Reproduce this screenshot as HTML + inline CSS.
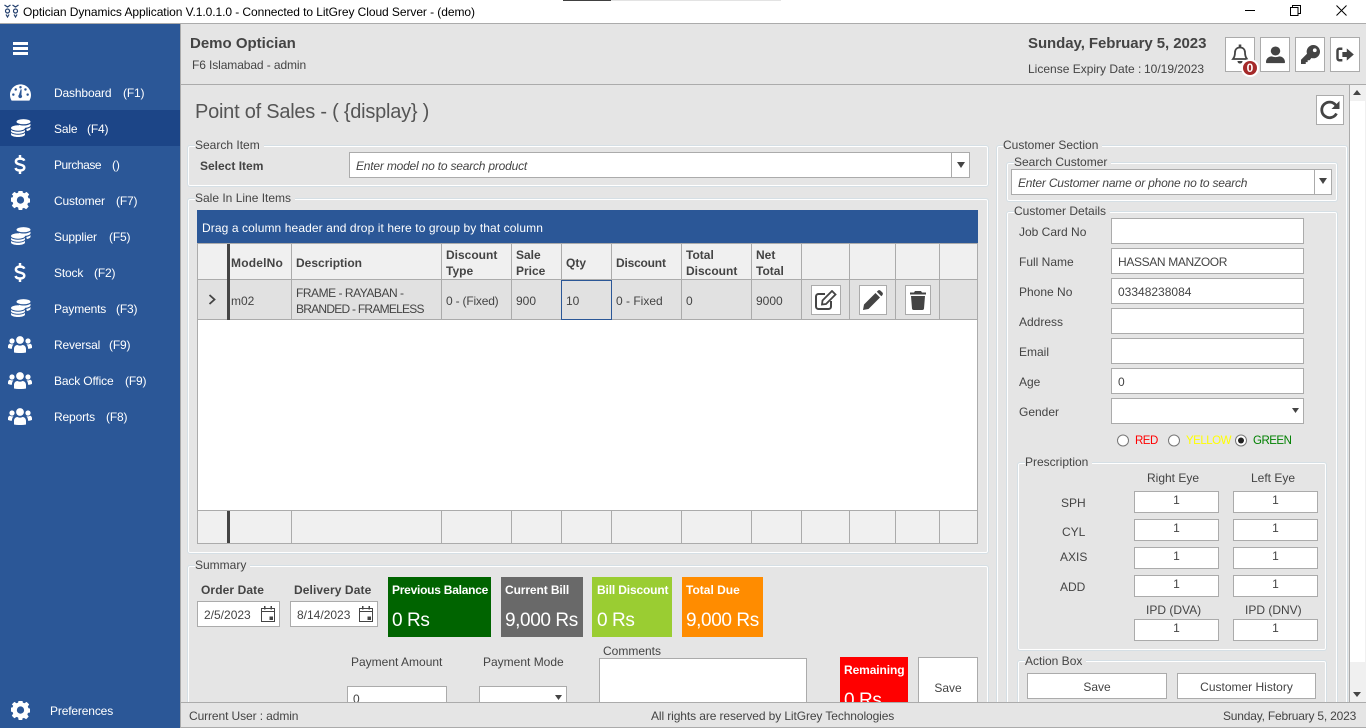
<!DOCTYPE html>
<html lang="en">
<head>
<meta charset="utf-8">
<title>Optician Dynamics Application</title>
<style>
html,body{margin:0;padding:0;width:1366px;height:728px;overflow:hidden;background:#e5e5e5;font-family:"Liberation Sans",Arial,sans-serif;font-size:12px;color:#444}
*{box-sizing:border-box}
#r{position:relative;width:1366px;height:728px;overflow:hidden}
.a,.t,.g,.i,.b{position:absolute}
.t{white-space:nowrap;line-height:16px;height:16px}
.w{color:#fff;letter-spacing:-.15px}
.s{font-weight:bold}
.g{border:1px solid #d5dfe5;box-shadow:inset 0 0 0 1px #fff;border-radius:3px}
.l{background:#e5e5e5;padding:0 4px 0 0}
.i{background:#fff;border:1px solid #ababab}
.b{background:#fff;border:1px solid #ababab;text-align:center;color:#444;display:flex;align-items:center;justify-content:center}
.v{position:absolute;width:1px;background:#ababab}
.c{position:absolute;white-space:nowrap;line-height:16px;font-weight:bold;color:#444}
.d{position:absolute;white-space:nowrap;line-height:16px;color:#444}
.tile{position:absolute;top:577px;height:60px;color:#fff}
.tile b{position:absolute;left:4px;top:5px;font-size:12px;line-height:16px;white-space:nowrap}
.tile span{position:absolute;left:4px;top:32px;font-size:19px;line-height:24px;white-space:nowrap;letter-spacing:-.4px}
.n{text-align:center;line-height:17px;font-size:12px;color:#444}
.r{font-size:11.500px;letter-spacing:-.5px}
svg{display:block}
.ic{position:absolute;fill:#fff}
</style>
</head>
<body>
<div id="r">
<svg width="0" height="0" style="position:absolute">
<defs>
<symbol id="coins" viewBox="0 0 20 18"><g fill="#fff"><ellipse cx="12.500" cy="2.700" rx="7" ry="2.600"/><path d="M8 5.900c1.300.4 2.900.6 4.500.6 2.700 0 5.400-.6 7-1.800v1.500c0 1.300-2.500 2.400-5.500 2.700C12.500 7.800 10.500 7 8 6.700z"/><path d="M15.300 10c1.900-.4 3.300-1 4.200-1.900v1.600c0 1-1.500 1.900-3.700 2.300z"/><ellipse cx="7" cy="9" rx="7" ry="2.700"/><path d="M0 11c1.500 1.100 4 1.800 7 1.800s5.500-.7 7-1.800v1.300c0 1.400-3.100 2.500-7 2.500s-7-1.100-7-2.500z"/><path d="M0 14c1.500 1.100 4 1.800 7 1.800s5.500-.7 7-1.800v1.500c0 1.400-3.100 2.500-7 2.500s-7-1.100-7-2.500z"/></g></symbol>
<symbol id="dollar" viewBox="0 0 12 20"><path fill="none" stroke="#fff" stroke-width="2.600" d="M10.500 6C10 4.500 8.500 3.800 6 3.800 3.300 3.800 1.700 5 1.700 6.800c0 4.200 8.800 2.300 8.800 6.500 0 1.800-1.700 3-4.500 3-2.600 0-4.200-.9-4.700-2.600"/><path fill="#fff" d="M4.700 0h2.600v4H4.700zM4.700 16h2.600v4H4.700z"/></symbol>
<symbol id="gear" viewBox="0 0 20 20"><path fill="#fff" fill-rule="evenodd" d="M8 0h4l.6 2.800 1.700.7L16.700 2l2.800 2.800-1.500 2.400.8 1.800 2.200.5v4l-2.800.6-.7 1.700 1.500 2.400-2.800 2.800-2.400-1.500-1.700.7L12 22H8l-.6-2.800-1.700-.7L3.300 20 .5 17.200 2 14.800l-.7-1.700L-1 12.500v-4l2.300-.5.700-1.800L.5 4.800 3.300 2l2.400 1.500 1.700-.7zM10 7a4 4 0 1 0 0 8 4 4 0 0 0 0-8z" transform="translate(0 -1) scale(.96) translate(.4 0)"/></symbol>
<symbol id="users" viewBox="0 0 24 17"><g fill="#fff"><circle cx="12" cy="4" r="3.900"/><circle cx="4" cy="5" r="2.600"/><circle cx="20" cy="5" r="2.600"/><path d="M6 16.500v-3.500c0-2.400 1.600-4 3.500-4 1.500.9 3.500.9 5 0 1.900 0 3.500 1.600 3.500 4v3.500c-3.500.7-8.500.7-12 0z"/><path d="M0 10.500c0-1.500.8-2.800 2-2.800 1 .7 2.500.8 3.600.5-1.100 1-1.600 2.500-1.700 4.600-1.700 0-3-.4-3.900-.9zM24 10.500c0-1.500-.8-2.800-2-2.800-1 .7-2.500.8-3.600.5 1.100 1 1.600 2.500 1.700 4.600 1.700 0 3-.4 3.900-.9z"/></g></symbol>
</defs>
</svg>

<!-- title bar -->
<div class="a" style="left:0;top:0;width:1366px;height:24px;background:#fff;border-bottom:1px solid #ababab"></div>
<div class="a" style="left:563px;top:0;width:48px;height:1px;background:#404040"></div>
<div class="a" style="left:611px;top:0;width:170px;height:1px;background:#e3e3e3"></div>
<svg class="a" style="left:4px;top:4px" width="15" height="14" viewBox="0 0 15 14"><g fill="none" stroke="#24406e" stroke-width="1.200"><path d="M.5 1l3 2 3-2M8.500 1l3 2 3-2"/><circle cx="3.500" cy="7" r="2"/><circle cx="11.500" cy="7" r="2"/><path d="M2 10.500l1.500 2.500 1.500-2.500M10 10.500l1.500 2.500 1.500-2.500"/></g></svg>
<div class="t" style="left:23px;top:4px;color:#000;letter-spacing:-.07px">Optician Dynamics Application V.1.0.1.0 - Connected to LitGrey Cloud Server - (demo)</div>
<div class="a" style="left:1245px;top:10px;width:10px;height:1px;background:#000"></div>
<svg class="a" style="left:1290px;top:5px" width="11" height="11" viewBox="0 0 11 11"><path fill="none" stroke="#000" d="M.5 2.500h7.500v8H.5zM2.500 2.500V.5h8v8H8"/></svg>
<svg class="a" style="left:1336px;top:5px" width="11" height="11" viewBox="0 0 11 11"><path stroke="#000" d="M.5.500l10 10M10.500.500l-10 10"/></svg>

<!-- sidebar -->
<div class="a" style="left:0;top:24px;width:180px;height:704px;background:#2b5797"></div>
<div class="a" style="left:180px;top:24px;width:1px;height:704px;background:#ababab"></div>
<div class="a" style="left:0;top:110px;width:180px;height:36px;background:#1c4587"></div>
<div class="a" style="left:13px;top:42px;width:15px;height:3px;background:#fff"></div>
<div class="a" style="left:13px;top:47px;width:15px;height:3px;background:#fff"></div>
<div class="a" style="left:13px;top:52px;width:15px;height:3px;background:#fff"></div>

<svg class="ic" style="left:10px;top:84px" width="21" height="17" viewBox="0 0 22 17"><path fill="#fff" fill-rule="evenodd" d="M11 0C5 0 0 4.800 0 11c0 2 .5 4 1.500 5.700.2.200.4.300.6.300h17.800c.2 0 .4-.1.600-.3C21.500 15 22 13 22 11 22 4.800 17 0 11 0zM3.500 12a1.300 1.300 0 1 1 0-2.600 1.300 1.300 0 0 1 0 2.600zM6 6.700a1.300 1.300 0 1 1 0-2.600 1.300 1.300 0 0 1 0 2.600zM11 4.300a1.300 1.300 0 1 1 0-2.600 1.300 1.300 0 0 1 0 2.600zM16.200 6.700a1.300 1.300 0 1 1 0-2.600 1.300 1.300 0 0 1 0 2.600zM18.500 12a1.300 1.300 0 1 1 0-2.600 1.300 1.300 0 0 1 0 2.600zM12.700 12.400a2 2 0 1 1-3.300-1.500l1.800-5.800 1 .2-.2 5.900c.5.300.7.700.7 1.200z"/></svg>
<div class="t w" style="left:54px;top:85px">Dashboard</div><div class="t w" style="left:123px;top:85px">(F1)</div>

<svg class="ic" style="left:11px;top:119px" width="20" height="18"><use href="#coins"/></svg>
<div class="t w" style="left:54px;top:121px">Sale</div><div class="t w" style="left:87px;top:121px">(F4)</div>

<svg class="ic" style="left:14px;top:155px" width="12" height="19"><use href="#dollar"/></svg>
<div class="t w" style="left:54px;top:157px;letter-spacing:-.45px">Purchase</div><div class="t w" style="left:112px;top:157px">()</div>

<svg class="ic" style="left:11px;top:191px" width="19" height="19"><use href="#gear"/></svg>
<div class="t w" style="left:54px;top:193px">Customer</div><div class="t w" style="left:116px;top:193px">(F7)</div>

<svg class="ic" style="left:11px;top:227px" width="20" height="18"><use href="#coins"/></svg>
<div class="t w" style="left:54px;top:229px">Supplier</div><div class="t w" style="left:109px;top:229px">(F5)</div>

<svg class="ic" style="left:14px;top:263px" width="12" height="19"><use href="#dollar"/></svg>
<div class="t w" style="left:54px;top:265px">Stock</div><div class="t w" style="left:94px;top:265px">(F2)</div>

<svg class="ic" style="left:11px;top:299px" width="20" height="18"><use href="#coins"/></svg>
<div class="t w" style="left:54px;top:301px">Payments</div><div class="t w" style="left:116px;top:301px">(F3)</div>

<svg class="ic" style="left:8px;top:336px" width="24" height="17"><use href="#users"/></svg>
<div class="t w" style="left:54px;top:337px">Reversal</div><div class="t w" style="left:109px;top:337px">(F9)</div>

<svg class="ic" style="left:8px;top:372px" width="24" height="17"><use href="#users"/></svg>
<div class="t w" style="left:54px;top:373px">Back Office</div><div class="t w" style="left:125px;top:373px">(F9)</div>

<svg class="ic" style="left:8px;top:408px" width="24" height="17"><use href="#users"/></svg>
<div class="t w" style="left:54px;top:409px">Reports</div><div class="t w" style="left:106px;top:409px">(F8)</div>

<svg class="ic" style="left:11px;top:701px" width="19" height="19"><use href="#gear"/></svg>
<div class="t w" style="left:50px;top:703px">Preferences</div>

<!-- top header -->
<div class="a" style="left:181px;top:84px;width:1185px;height:1px;background:#ababab"></div>
<div class="t s" style="left:190px;top:36px;font-size:15px">Demo Optician</div>
<div class="t" style="left:192px;top:57px;letter-spacing:-.1px">F6 Islamabad - admin</div>
<div class="t s" style="left:1028px;top:36px;font-size:15px;letter-spacing:-.06px">Sunday, February 5, 2023</div>
<div class="t" style="left:1028px;top:61px">License Expiry Date :</div>
<div class="t" style="left:1144px;top:61px">10/19/2023</div>

<div class="b" style="left:1225px;top:37px;width:30px;height:35px"><svg width="20" height="22" viewBox="0 0 20 22" style="margin-top:-1px"><path fill="none" stroke="#444" stroke-width="1.800" d="M3 16c1.500-2 2-3.500 2-6.500C5 6.500 7 4.500 10 4.500s5 2 5 5c0 3 .5 4.500 2 6.500z"/><path fill="#444" d="M8.700 1.500h2.600v3H8.700zM7.500 18h5c0 1.500-1 2.500-2.500 2.500S7.500 19.500 7.500 18z"/></svg></div>
<div class="a" style="left:1241px;top:59px;width:18px;height:18px;border-radius:50%;background:#fff"></div>
<div class="a" style="left:1243px;top:61px;width:14px;height:14px;border-radius:50%;background:#a52a2a;color:#fff;font-weight:bold;font-size:12px;line-height:14px;text-align:center">0</div>

<div class="b" style="left:1260px;top:37px;width:30px;height:35px"><svg width="19" height="18" viewBox="0 0 20 20" preserveAspectRatio="none"><circle cx="10" cy="5.500" r="5" fill="#444"/><path fill="#444" d="M1 19c-.6 0-1-.4-1-1 0-4 3-6.500 6-6.500 1.200.5 2.500.8 4 .8s2.800-.3 4-.8c3 0 6 2.500 6 6.500 0 .6-.4 1-1 1z"/></svg></div>
<div class="b" style="left:1295px;top:37px;width:30px;height:35px"><svg width="19" height="19" viewBox="0 0 20 20"><path fill="#444" fill-rule="evenodd" d="M13 0a7 7 0 0 1 0 14c-.7 0-1.400-.1-2-.3L9 16H7v2H5v2H0v-4.500l6.300-6.300A7 7 0 0 1 13 0zm1.500 3.500a2 2 0 1 0 0 4 2 2 0 0 0 0-4z"/></svg></div>
<div class="b" style="left:1330px;top:37px;width:30px;height:35px"><svg width="18" height="15" viewBox="0 0 20 17"><path fill="#444" d="M12 1.500l8 7-8 7v-4.200H7V5.700h5z"/><path fill="none" stroke="#444" stroke-width="2.800" d="M7 2H3.500C2.300 2 1.500 3 1.500 4.200v8.600c0 1.200.8 2.200 2 2.200H7"/></svg></div>

<!-- page title -->
<div class="t" style="left:195px;top:100px;font-size:20px;line-height:24px;height:24px;color:#555;letter-spacing:-.24px">Point of Sales - ( {display} )</div>
<div class="b" style="left:1316px;top:95px;width:28px;height:30px"><svg width="22" height="20" viewBox="0 0 22 20"><path fill="none" stroke="#444" stroke-width="2.800" d="M17.500 13.500A7.800 7.800 0 1 1 17 5.500"/><path fill="#444" d="M20.500 1v8h-8z"/></svg></div>

<!-- Search Item -->
<div class="g" style="left:187px;top:145px;width:802px;height:42px"></div>
<div class="t l" style="left:195px;top:137px">Search Item</div>
<div class="t s" style="left:200px;top:158px">Select Item</div>
<div class="i" style="left:349px;top:152px;width:621px;height:26px"></div>
<div class="t" style="left:356px;top:158px;font-style:italic;letter-spacing:-.2px">Enter model no to search product</div>
<div class="v" style="left:951px;top:153px;height:24px"></div>
<svg class="a" style="left:957px;top:162px" width="8" height="6"><path fill="#444" d="M0 0h8L4 6z"/></svg>

<!-- Sale lines -->
<div class="g" style="left:187px;top:198px;width:802px;height:356px"></div>
<div class="t l" style="left:195px;top:190px">Sale In Line Items</div>
<div class="a" style="left:197px;top:210px;width:781px;height:34px;background:#2b5797"></div>
<div class="t w" style="left:202px;top:220px;letter-spacing:.1px">Drag a column header and drop it here to group by that column</div>
<div class="a" style="left:197px;top:243px;width:781px;height:301px;background:#fff;border:1px solid #ababab;border-bottom:2px solid #ababab"></div>
<div class="a" style="left:198px;top:244px;width:779px;height:36px;background:#f0f0f0;border-bottom:1px solid #ababab"></div>
<div class="a" style="left:198px;top:280px;width:779px;height:40px;background:#e1e1e1;border-bottom:1px solid #ababab"></div>
<div class="a" style="left:198px;top:510px;width:779px;height:33px;background:#f0f0f0;border-top:1px solid #ababab"></div>

<div class="a" style="left:227px;top:244px;width:3px;height:76px;background:#444"></div>
<div class="a" style="left:227px;top:511px;width:3px;height:32px;background:#444"></div>
<div class="v" style="left:291px;top:244px;height:76px"></div><div class="v" style="left:291px;top:511px;height:32px"></div>
<div class="v" style="left:441px;top:244px;height:76px"></div><div class="v" style="left:441px;top:511px;height:32px"></div>
<div class="v" style="left:511px;top:244px;height:76px"></div><div class="v" style="left:511px;top:511px;height:32px"></div>
<div class="v" style="left:561px;top:244px;height:76px"></div><div class="v" style="left:561px;top:511px;height:32px"></div>
<div class="v" style="left:611px;top:244px;height:76px"></div><div class="v" style="left:611px;top:511px;height:32px"></div>
<div class="v" style="left:681px;top:244px;height:76px"></div><div class="v" style="left:681px;top:511px;height:32px"></div>
<div class="v" style="left:751px;top:244px;height:76px"></div><div class="v" style="left:751px;top:511px;height:32px"></div>
<div class="v" style="left:801px;top:244px;height:76px"></div><div class="v" style="left:801px;top:511px;height:32px"></div>
<div class="v" style="left:849px;top:244px;height:76px"></div><div class="v" style="left:849px;top:511px;height:32px"></div>
<div class="v" style="left:895px;top:244px;height:76px"></div><div class="v" style="left:895px;top:511px;height:32px"></div>
<div class="v" style="left:939px;top:244px;height:76px"></div><div class="v" style="left:939px;top:511px;height:32px"></div>

<div class="c" style="left:231px;top:255px;letter-spacing:.2px">ModelNo</div>
<div class="c" style="left:296px;top:255px">Description</div>
<div class="c" style="left:446px;top:247px">Discount<br>Type</div>
<div class="c" style="left:516px;top:247px">Sale<br>Price</div>
<div class="c" style="left:566px;top:255px">Qty</div>
<div class="c" style="left:616px;top:255px;letter-spacing:-.2px">Discount</div>
<div class="c" style="left:686px;top:247px">Total<br>Discount</div>
<div class="c" style="left:756px;top:247px">Net<br>Total</div>

<svg class="a" style="left:208px;top:294px" width="8" height="11" viewBox="0 0 8 11"><path fill="none" stroke="#444" stroke-width="1.800" d="M1.500 1l5 4.500-5 4.500"/></svg>
<div class="d" style="left:231px;top:293px">m02</div>
<div class="d" style="left:296px;top:285px"><span style="letter-spacing:-.47px">FRAME - RAYABAN -</span><br><span style="letter-spacing:-.75px">BRANDED - FRAMELESS</span></div>
<div class="d" style="left:446px;top:293px;letter-spacing:-.2px">0 - (Fixed)</div>
<div class="d" style="left:516px;top:293px">900</div>
<div class="a" style="left:561px;top:280px;width:51px;height:40px;border:1px solid #2b5797"></div>
<div class="d" style="left:566px;top:293px">10</div>
<div class="d" style="left:616px;top:293px">0 - Fixed</div>
<div class="d" style="left:686px;top:293px">0</div>
<div class="d" style="left:756px;top:293px">9000</div>

<div class="b" style="left:811px;top:285px;width:30px;height:30px"><svg width="22" height="20" viewBox="0 0 22 20"><path fill="none" stroke="#444" stroke-width="2" d="M10 4H3.500C2.100 4 1 5.100 1 6.500v10C1 17.900 2.100 19 3.500 19h10c1.400 0 2.500-1.100 2.500-2.500V11"/><path fill="none" stroke="#444" stroke-width="1.800" d="M7.500 10.500L17 1l3.500 3.500-9.500 9.500-4 .5z"/></svg></div>
<div class="b" style="left:859px;top:285px;width:28px;height:30px"><svg width="20" height="20" viewBox="0 0 20 20"><path fill="#444" d="M0 20l1-5.500L12.500 3l4.500 4.500L5.500 19zM13.800 1.700l1-1c.8-.8 2-.8 2.800 0l1.700 1.700c.8.8.8 2 0 2.800l-1 1z"/></svg></div>
<div class="b" style="left:905px;top:285px;width:26px;height:30px"><svg width="16" height="19" viewBox="0 0 16 19"><path fill="#444" d="M5 0h6l1 1.500h4v2H0v-2h4zM1 5h14l-1 12.500c-.1.900-.8 1.500-1.700 1.500H3.700c-.9 0-1.600-.6-1.700-1.500z"/></svg></div>

<!-- Summary -->
<div class="g" style="left:187px;top:565px;width:802px;height:180px"></div>
<div class="t l" style="left:195px;top:557px">Summary</div>
<div class="t s" style="left:201px;top:582px;letter-spacing:.1px">Order Date</div>
<div class="t s" style="left:294px;top:582px;letter-spacing:.1px">Delivery Date</div>
<div class="i" style="left:197px;top:601px;width:83px;height:26px"></div>
<div class="t" style="left:204px;top:607px">2/5/2023</div>
<svg class="a" style="left:261px;top:606px" width="14" height="16" viewBox="0 0 14 16"><path fill="none" stroke="#444" d="M.5 2.500h13v13H.5zM.5 5.500h13"/><path fill="#444" d="M3 0h1.500v3.500H3zM9.500 0H11v3.500H9.500zM8.500 10.500h3.500v3.500H8.500z"/></svg>
<div class="i" style="left:290px;top:601px;width:88px;height:26px"></div>
<div class="t" style="left:297px;top:607px">8/14/2023</div>
<svg class="a" style="left:359px;top:606px" width="14" height="16" viewBox="0 0 14 16"><path fill="none" stroke="#444" d="M.5 2.500h13v13H.5zM.5 5.500h13"/><path fill="#444" d="M3 0h1.500v3.500H3zM9.500 0H11v3.500H9.500zM8.500 10.500h3.500v3.500H8.500z"/></svg>

<div class="tile" style="left:388px;width:103px;background:#006400"><b style="letter-spacing:-.25px">Previous Balance</b><span>0 Rs</span></div>
<div class="tile" style="left:501px;width:82px;background:#696969"><b style="letter-spacing:-.1px">Current Bill</b><span>9,000 Rs</span></div>
<div class="tile" style="left:592px;width:80px;background:#9acd32"><b style="left:5px;letter-spacing:-.15px">Bill Discount</b><span style="left:5px">0 Rs</span></div>
<div class="tile" style="left:682px;width:81px;background:#ff8c00"><b>Total Due</b><span>9,000 Rs</span></div>

<div class="t" style="left:351px;top:654px">Payment Amount</div>
<div class="t" style="left:483px;top:654px">Payment Mode</div>
<div class="t" style="left:603px;top:643px">Comments</div>
<div class="i" style="left:347px;top:686px;width:100px;height:40px"></div>
<div class="t" style="left:353px;top:691px">0</div>
<div class="i" style="left:479px;top:686px;width:88px;height:40px"></div>
<svg class="a" style="left:555px;top:695px" width="7" height="5"><path fill="#444" d="M0 0h7L3.500 5z"/></svg>
<div class="i" style="left:599px;top:658px;width:208px;height:70px"></div>
<div class="tile" style="left:840px;top:657px;width:68px;height:60px;background:#f00"><b style="letter-spacing:-.1px">Remaining</b><span>0 Rs</span></div>
<div class="b" style="left:918px;top:657px;width:60px;height:60px;padding-top:1px">Save</div>

<!-- Customer Section -->
<div class="g" style="left:996px;top:145px;width:352px;height:600px"></div>
<div class="t l" style="left:1003px;top:137px">Customer Section</div>
<div class="g" style="left:1006px;top:162px;width:332px;height:40px"></div>
<div class="t l" style="left:1014px;top:154px">Search Customer</div>
<div class="i" style="left:1011px;top:169px;width:321px;height:26px"></div>
<div class="t" style="left:1018px;top:175px;font-style:italic;letter-spacing:-.2px">Enter Customer name or phone no to search</div>
<div class="v" style="left:1314px;top:170px;height:24px"></div>
<svg class="a" style="left:1319px;top:178px" width="8" height="6"><path fill="#444" d="M0 0h8L4 6z"/></svg>

<div class="g" style="left:1006px;top:211px;width:332px;height:530px"></div>
<div class="t l" style="left:1014px;top:203px">Customer Details</div>

<div class="t" style="left:1019px;top:224px">Job Card No</div><div class="i" style="left:1111px;top:218px;width:193px;height:26px"></div>
<div class="t" style="left:1019px;top:254px">Full Name</div><div class="i" style="left:1111px;top:248px;width:193px;height:26px"></div><div class="t" style="left:1118px;top:254px;letter-spacing:-.35px">HASSAN MANZOOR</div>
<div class="t" style="left:1019px;top:284px">Phone No</div><div class="i" style="left:1111px;top:278px;width:193px;height:26px"></div><div class="t" style="left:1118px;top:284px">03348238084</div>
<div class="t" style="left:1019px;top:314px">Address</div><div class="i" style="left:1111px;top:308px;width:193px;height:26px"></div>
<div class="t" style="left:1019px;top:344px">Email</div><div class="i" style="left:1111px;top:338px;width:193px;height:26px"></div>
<div class="t" style="left:1019px;top:374px">Age</div><div class="i" style="left:1111px;top:368px;width:193px;height:26px"></div><div class="t" style="left:1118px;top:374px">0</div>
<div class="t" style="left:1019px;top:404px">Gender</div><div class="i" style="left:1111px;top:398px;width:193px;height:26px"></div>
<svg class="a" style="left:1292px;top:408px" width="7" height="5"><path fill="#444" d="M0 0h7L3.500 5z"/></svg>

<svg class="a" style="left:1117px;top:434px" width="130" height="13" viewBox="0 0 130 13"><g fill="#fff" stroke="#777"><circle cx="6" cy="6.500" r="5.500"/><circle cx="57" cy="6.500" r="5.500"/><circle cx="124" cy="6.500" r="5.500"/></g><circle cx="124" cy="6.500" r="3" fill="#222"/></svg>
<div class="t r" style="left:1135px;top:433px;color:#f00">RED</div>
<div class="t r" style="left:1186px;top:433px;color:#ff0">YELLOW</div>
<div class="t r" style="left:1253px;top:433px;color:#008000">GREEN</div>

<!-- Prescription -->
<div class="g" style="left:1017px;top:462px;width:310px;height:189px"></div>
<div class="t l" style="left:1025px;top:454px">Prescription</div>
<div class="t" style="left:1147px;top:470px">Right Eye</div>
<div class="t" style="left:1251px;top:470px">Left Eye</div>
<div class="t" style="left:1061px;top:495px">SPH</div>
<div class="t" style="left:1062px;top:524px">CYL</div>
<div class="t" style="left:1060px;top:549px">AXIS</div>
<div class="t" style="left:1060px;top:579px">ADD</div>
<div class="t" style="left:1146px;top:602px">IPD (DVA)</div>
<div class="t" style="left:1245px;top:602px">IPD (DNV)</div>

<div class="i n" style="left:1134px;top:491px;width:85px;height:22px">1</div>
<div class="i n" style="left:1233px;top:491px;width:85px;height:22px">1</div>
<div class="i n" style="left:1134px;top:519px;width:85px;height:22px">1</div>
<div class="i n" style="left:1233px;top:519px;width:85px;height:22px">1</div>
<div class="i n" style="left:1134px;top:547px;width:85px;height:22px">1</div>
<div class="i n" style="left:1233px;top:547px;width:85px;height:22px">1</div>
<div class="i n" style="left:1134px;top:575px;width:85px;height:22px">1</div>
<div class="i n" style="left:1233px;top:575px;width:85px;height:22px">1</div>
<div class="i n" style="left:1134px;top:619px;width:85px;height:22px">1</div>
<div class="i n" style="left:1233px;top:619px;width:85px;height:22px">1</div>

<!-- Action box -->
<div class="g" style="left:1017px;top:660px;width:310px;height:70px"></div>
<div class="t l" style="left:1025px;top:653px">Action Box</div>
<div class="b" style="left:1027px;top:673px;width:140px;height:26px;padding-top:1px">Save</div>
<div class="b" style="left:1177px;top:673px;width:139px;height:26px;padding-top:1px">Customer History</div>

<!-- scrollbar -->
<div class="a" style="left:1349px;top:85px;width:17px;height:617px;background:#f0f0f0;border-left:1px solid #ababab"></div>
<div class="a" style="left:1350px;top:101px;width:15px;height:561px;background:#fff"></div>
<svg class="a" style="left:1353px;top:90px" width="8" height="5"><path fill="#444" d="M4 0l4 5H0z"/></svg>
<svg class="a" style="left:1353px;top:692px" width="8" height="5"><path fill="#444" d="M0 0h8L4 5z"/></svg>

<!-- status bar -->
<div class="a" style="left:181px;top:702px;width:1185px;height:26px;background:#e5e5e5;border-top:1px solid #ababab;border-bottom:1px solid #ababab"></div>
<div class="t" style="left:189px;top:708px;letter-spacing:-.1px">Current User : admin</div>
<div class="t" style="left:651px;top:708px;letter-spacing:-.1px">All rights are reserved by LitGrey Technologies</div>
<div class="t" style="left:1223px;top:708px;letter-spacing:-.2px">Sunday, February 5, 2023</div>
</div>
</body>
</html>
